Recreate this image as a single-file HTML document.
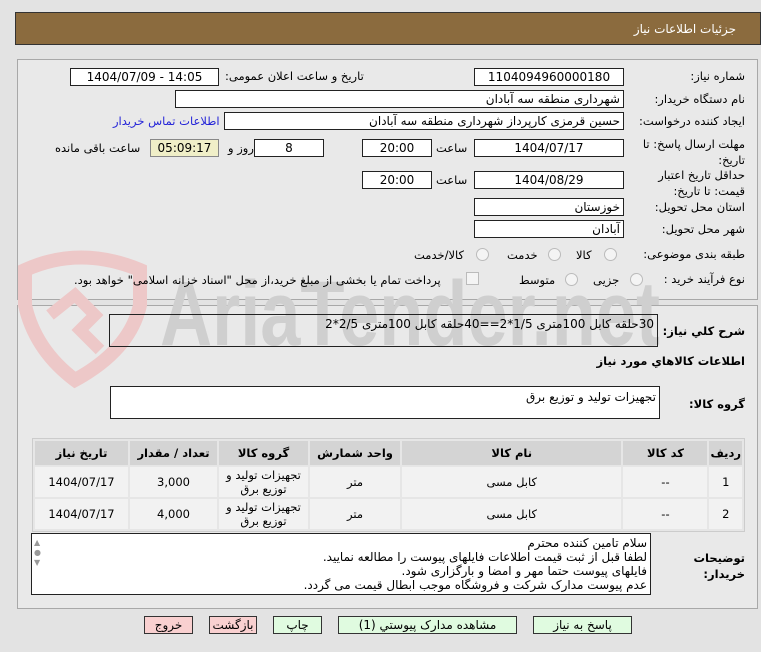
<!DOCTYPE html>
<html><head><meta charset="utf-8"><style>
body{margin:0;width:761px;height:652px;background:#e3e3e3;font-family:"DejaVu Sans","Noto Sans CJK SC",sans-serif;font-size:11.5px;color:#000;position:relative;overflow:hidden}
.a{position:absolute}
.hdr{left:15px;top:12px;width:744px;height:31px;background:#8b6b3e;border:1px solid #333}
.hdr span{position:absolute;right:24px;top:9px;color:#fff;font-size:12px}
.pnl{border:1px solid #a8a8a8;background:#e9e9e9}
.box{position:absolute;background:#fff;border:1px solid #222;box-sizing:border-box;direction:rtl;padding:2px 3px;white-space:nowrap;font-size:12px}
.c{text-align:center;direction:ltr}
.l{position:absolute;direction:rtl;white-space:nowrap;text-align:right}
.rad{position:absolute;width:11px;height:11px;border-radius:50%;border:1px solid #bbb;background:#f4f4f4}
table{border-collapse:separate;border-spacing:2px;position:absolute;left:32px;top:438px;width:713px;background:#e6e6e6;border:1px solid #ccc}
th{background:#d4d4d4;height:22px;font-size:11.5px}
td{background:#f2f2f2;height:26px;text-align:center;font-size:11.5px;line-height:14px}
.btn{position:absolute;top:616px;height:18px;border:1px solid #333;box-sizing:border-box;text-align:center;font-size:12px;line-height:16px}
.g{background:#e0fbe0}.p{background:#f9d0d0}
</style></head><body>
<div class="a hdr"><span>جزئیات اطلاعات نیاز</span></div>
<div class="a pnl" style="left:17px;top:59px;width:739px;height:239px"></div>
<div class="a pnl" style="left:17px;top:305px;width:739px;height:302px"></div>
<svg class="a" style="left:0;top:240px" width="700" height="150">
<path d="M25 30 Q80 5 140 30 L140 65 Q130 110 75 140 Q35 110 25 65 Z" fill="none" stroke="#edc8c8" stroke-width="14"/>
<path d="M50 75 L75 55 L95 75 L80 90 L100 110" fill="none" stroke="#edc8c8" stroke-width="12"/>
<text x="160" y="105" font-family="Liberation Sans" font-weight="bold" font-size="92" fill="#cfcfcf" textLength="500" lengthAdjust="spacingAndGlyphs">AriaTender.net</text>
</svg>

<div class="l" style="right:16px;top:69px">شماره نیاز:</div>
<div class="box c" style="left:474px;top:68px;width:150px;height:18px;line-height:13px">1104094960000180</div>
<div class="l" style="left:225px;top:69px">تاریخ و ساعت اعلان عمومی:</div>
<div class="box c" style="left:70px;top:68px;width:149px;height:18px;line-height:13px">1404/07/09 - 14:05</div>

<div class="l" style="right:16px;top:92px">نام دستگاه خریدار:</div>
<div class="box" style="left:175px;top:90px;width:449px;height:18px;line-height:13px">شهرداری منطقه سه آبادان</div>

<div class="l" style="right:16px;top:114px">ایجاد کننده درخواست:</div>
<div class="box" style="left:224px;top:112px;width:400px;height:18px;line-height:13px">حسین قرمزی کارپرداز شهرداری منطقه سه آبادان</div>
<div class="l" style="left:113px;top:114px;color:#2424d8">اطلاعات تماس خریدار</div>

<div class="l" style="right:16px;top:136px;line-height:16px">مهلت ارسال پاسخ: تا<br>تاریخ:</div>
<div class="box c" style="left:474px;top:139px;width:150px;height:18px;line-height:13px">1404/07/17</div>
<div class="l" style="left:436px;top:141px">ساعت</div>
<div class="box c" style="left:362px;top:139px;width:70px;height:18px;line-height:13px">20:00</div>
<div class="box c" style="left:254px;top:139px;width:70px;height:18px;line-height:13px">8</div>
<div class="l" style="left:228px;top:141px">روز و</div>
<div class="box c" style="left:150px;top:139px;width:69px;height:18px;line-height:13px;background:#f0efc8;border-color:#888">05:09:17</div>
<div class="l" style="left:55px;top:141px">ساعت باقی مانده</div>

<div class="l" style="right:16px;top:167px;line-height:16px">حداقل تاریخ اعتبار<br>قیمت: تا تاریخ:</div>
<div class="box c" style="left:474px;top:171px;width:150px;height:18px;line-height:13px">1404/08/29</div>
<div class="l" style="left:436px;top:173px">ساعت</div>
<div class="box c" style="left:362px;top:171px;width:70px;height:18px;line-height:13px">20:00</div>

<div class="l" style="right:16px;top:200px">استان محل تحویل:</div>
<div class="box" style="left:474px;top:198px;width:150px;height:18px;line-height:13px">خوزستان</div>
<div class="l" style="right:16px;top:222px">شهر محل تحویل:</div>
<div class="box" style="left:474px;top:220px;width:150px;height:18px;line-height:13px">آبادان</div>

<div class="l" style="right:16px;top:247px">طبقه بندی موضوعی:</div>
<div class="rad" style="left:604px;top:248px"></div><div class="l" style="left:576px;top:248px">کالا</div>
<div class="rad" style="left:548px;top:248px"></div><div class="l" style="left:507px;top:248px">خدمت</div>
<div class="rad" style="left:476px;top:248px"></div><div class="l" style="left:414px;top:248px">کالا/خدمت</div>

<div class="l" style="right:16px;top:272px">نوع فرآیند خرید :</div>
<div class="rad" style="left:630px;top:273px"></div><div class="l" style="left:593px;top:273px">جزیی</div>
<div class="rad" style="left:565px;top:273px"></div><div class="l" style="left:519px;top:273px">متوسط</div>
<div class="a" style="left:466px;top:272px;width:11px;height:11px;border:1px solid #bbb;background:#f4f4f4"></div>
<div class="l" style="left:74px;top:273px">پرداخت تمام یا بخشی از مبلغ خرید،از محل "اسناد خزانه اسلامی" خواهد بود.</div>

<div class="l" style="right:16px;top:324px;font-weight:bold">شرح کلي نياز:</div>
<div class="box" style="left:109px;top:314px;width:549px;height:33px;line-height:14px;background:transparent">30حلقه کابل 100متری 1/5*2==40حلقه کابل 100متری 2/5*2</div>
<div class="l" style="right:16px;top:354px;font-weight:bold">اطلاعات کالاهاي مورد نياز</div>
<div class="l" style="right:16px;top:397px;font-weight:bold">گروه کالا:</div>
<div class="box" style="left:110px;top:386px;width:550px;height:33px;line-height:16px">تجهیزات تولید و توزیع برق</div>

<table dir="rtl">
<tr><th style="width:27px">ردیف</th><th style="width:82px">کد کالا</th><th>نام کالا</th><th style="width:88px">واحد شمارش</th><th style="width:87px">گروه کالا</th><th style="width:85px">تعداد / مقدار</th><th style="width:91px">تاریخ نیاز</th></tr>
<tr><td>1</td><td>--</td><td>کابل مسی</td><td>متر</td><td>تجهیزات تولید و<br>توزیع برق</td><td>3,000</td><td>1404/07/17</td></tr>
<tr><td>2</td><td>--</td><td>کابل مسی</td><td>متر</td><td>تجهیزات تولید و<br>توزیع برق</td><td>4,000</td><td>1404/07/17</td></tr>
</table>

<div class="l" style="right:16px;top:550px;font-weight:bold;line-height:16px">توضیحات<br>خریدار:</div>
<div class="box" style="left:31px;top:533px;width:620px;height:62px;line-height:14px;padding-top:2px">سلام تامین کننده محترم<br>لطفا قبل از ثبت قیمت اطلاعات فایلهای پیوست را مطالعه نمایید.<br>فایلهای پیوست حتما مهر و امضا و بارگزاری شود.<br>عدم پیوست مدارک شرکت و فروشگاه موجب ابطال قیمت می گردد.</div>
<div class="a" style="left:34px;top:538px;font-size:8px;color:#999;line-height:10px">▲<br>●<br>▼</div>

<div class="btn p" style="left:144px;width:49px">خروج</div>
<div class="btn p" style="left:209px;width:48px">بازگشت</div>
<div class="btn g" style="left:273px;width:49px">چاپ</div>
<div class="btn g" style="left:338px;width:179px">مشاهده مدارک پیوستي (1)</div>
<div class="btn g" style="left:533px;width:99px">پاسخ به نياز</div>
</body></html>
